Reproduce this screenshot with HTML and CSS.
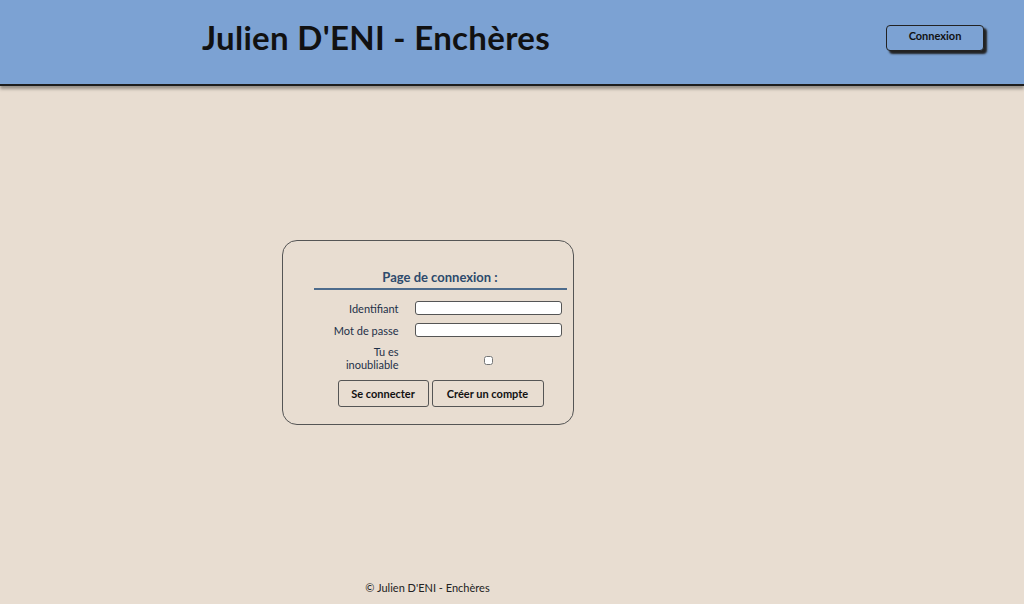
FILE: index.html
```html
<!DOCTYPE html>
<html lang="fr">
<head>
<meta charset="utf-8">
<title>Julien D'ENI - Enchères</title>
<link rel="stylesheet" href="styles.css">
</head>
<body>
<header class="site-header">
  <h1 class="site-title">Julien D'ENI - Enchères</h1>
  <button class="header-btn" type="button">Connexion</button>
</header>
<main class="main">
  <form class="login-card">
    <h2 class="login-title">Page de connexion :</h2>
    <div class="login-grid">
      <label class="field-label" for="id">Identifiant</label>
      <input class="field-input" id="id" type="text">
      <label class="field-label" for="pw">Mot de passe</label>
      <input class="field-input" id="pw" type="password">
      <label class="field-label" for="rem">Tu es<br>inoubliable</label>
      <div class="check-cell"><input class="field-check" id="rem" type="checkbox"></div>
    </div>
    <div class="login-actions">
      <button class="action-btn" type="button">Se connecter</button>
      <button class="action-btn" type="button">Créer un compte</button>
    </div>
  </form>
</main>
<footer class="site-footer">© Julien D'ENI - Enchères</footer>
</body>
</html>
```
FILE: styles.css
```css
* { box-sizing: border-box; }
html, body { margin: 0; padding: 0; }
body {
  font-family: "Lato", "Open Sans", sans-serif;
  background: #e8ddd1;
  min-height: 604px;
  display: flex;
  flex-direction: column;
  color: #111;
}
.site-header {
  height: 86px;
  background: #7ca2d3;
  border-bottom: 2px solid #1e1e1e;
  box-shadow: 0 3px 3px rgba(0,0,0,0.35);
  display: flex;
  align-items: center;
  justify-content: space-between;
  padding: 0 40px 10px 202px;
}
.site-title {
  margin: 0;
  font-size: 33px;
  letter-spacing: 0.3px;
  font-weight: 700;
  color: #111;
}
.header-btn {
  width: 98px;
  height: 26px;
  margin-top: 2px;
  background: #7ca2d3;
  border: 1px solid #222;
  border-radius: 4px;
  box-shadow: 3px 3px 2px #222;
  font-family: inherit;
  font-size: 11px;
  font-weight: 700;
  color: #111;
  padding: 0 0 6px;
}
.main {
  flex: 1;
  width: 855px;
  display: flex;
  align-items: center;
  justify-content: center;
  padding-bottom: 2px;
}
.login-card {
  width: 292px;
  height: 185px;
  border: 1px solid #555;
  border-radius: 15px;
  padding: 28px 6px 0 31px;
  display: flex;
  flex-direction: column;
}
.login-title {
  margin: 0;
  font-size: 13px;
  font-weight: 700;
  color: #2d4a6c;
  text-align: center;
  padding-bottom: 3px;
  border-bottom: 2px solid #4d6b8c;
}
.login-grid {
  display: grid;
  grid-template-columns: 85px 147px;
  column-gap: 16px;
  row-gap: 8px;
  margin-top: 11px;
  align-items: center;
}
.field-label {
  text-align: right;
  font-size: 11px;
  color: #1d3048;
  line-height: 13px;
}
.field-input {
  height: 14px;
  border: 1px solid #555;
  border-radius: 3px;
  background: #fff;
  padding: 0;
  margin: 0;
}
.check-cell { text-align: center; }
.field-check { width: 9px; height: 9px; margin: 0; }
.login-actions {
  display: flex;
  gap: 3px;
  margin-top: 9px;
  padding-left: 24px;
}
.action-btn {
  height: 27px;
  background: transparent;
  border: 1px solid #555;
  border-radius: 3px;
  font-family: inherit;
  font-size: 11px;
  font-weight: 700;
  color: #111;
  padding: 0 12px;
}
.action-btn:first-child { width: 91px; }
.action-btn:last-child { width: 112px; }
.site-footer {
  width: 855px;
  text-align: center;
  font-size: 11px;
  color: #222;
  padding-bottom: 10px;
}
```
